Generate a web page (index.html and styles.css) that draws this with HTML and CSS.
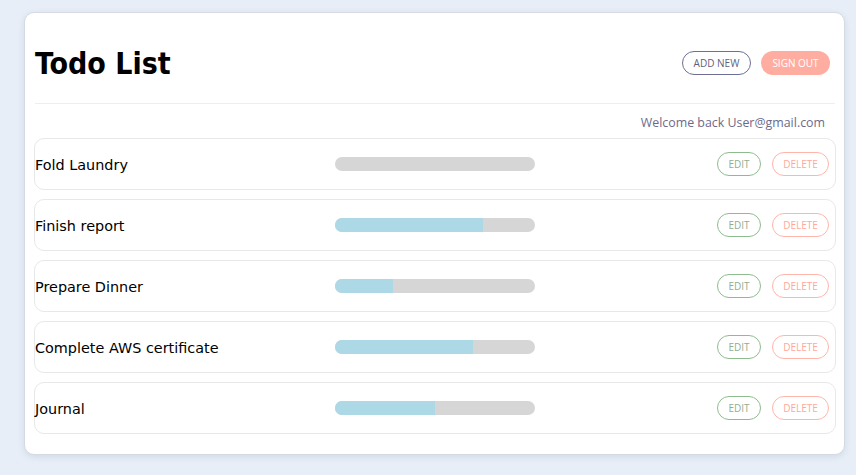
FILE: index.html
```html
<!DOCTYPE html>
<html>
<head>
<meta charset="utf-8">
<link rel="stylesheet" href="styles.css">
</head>
<body>
<div class="card">
  <div class="header">
    <h1 class="title">Todo List</h1>
    <div class="actions">
      <button class="btn btn-add">ADD NEW</button>
      <button class="btn btn-signout">SIGN OUT</button>
    </div>
  </div>
  <div class="divider"></div>
  <div class="welcome">Welcome back User@gmail.com</div>
  <div class="list">
    <div class="row"><div class="name">Fold Laundry</div><div class="bar"><div class="fill" style="width:0%"></div></div><div class="row-actions"><button class="btn btn-edit">EDIT</button><button class="btn btn-delete">DELETE</button></div></div>
    <div class="row"><div class="name">Finish report</div><div class="bar"><div class="fill" style="width:74%"></div></div><div class="row-actions"><button class="btn btn-edit">EDIT</button><button class="btn btn-delete">DELETE</button></div></div>
    <div class="row"><div class="name">Prepare Dinner</div><div class="bar"><div class="fill" style="width:29%"></div></div><div class="row-actions"><button class="btn btn-edit">EDIT</button><button class="btn btn-delete">DELETE</button></div></div>
    <div class="row"><div class="name">Complete AWS certificate</div><div class="bar"><div class="fill" style="width:69%"></div></div><div class="row-actions"><button class="btn btn-edit">EDIT</button><button class="btn btn-delete">DELETE</button></div></div>
    <div class="row"><div class="name">Journal</div><div class="bar"><div class="fill" style="width:50%"></div></div><div class="row-actions"><button class="btn btn-edit">EDIT</button><button class="btn btn-delete">DELETE</button></div></div>
  </div>
</div>
</body>
</html>
```
FILE: styles.css
```css
html, body { margin: 0; padding: 0; }
body {
  background: #e7eef7;
  padding: 12px 11px 0 24px;
  font-family: "DejaVu Sans", sans-serif;
  height: 475px;
  box-sizing: border-box;
}
.card {
  background: #fff;
  border: 1px solid #d5dbe3;
  border-radius: 10px;
  box-shadow: 0 2px 6px rgba(120,140,170,0.2);
  padding: 0 8px 19px 9px;
  height: 443px;
  box-sizing: border-box;
}
.header {
  display: flex;
  align-items: center;
  justify-content: space-between;
  padding: 30px 6px 20px 1px;
  height: 40px;
  box-sizing: content-box;
}
.title {
  margin: 0;
  font-family: "DejaVu Sans Condensed", "DejaVu Sans", sans-serif;
  font-stretch: condensed;
  font-size: 30px;
  font-weight: bold;
  color: #000;
}
.actions { display: flex; gap: 10px; }
.btn {
  font-family: "Open Sans", sans-serif;
  font-size: 10px;
  height: 24px;
  border-radius: 12px;
  background: #fff;
  padding: 0;
  cursor: pointer;
  box-sizing: border-box;
}
.btn-add {
  width: 69px;
  border: 1px solid #6e6e96;
  color: #5f5f80;
}
.btn-signout {
  width: 69px;
  border: none;
  background: #ffada0;
  color: #fff;
}
.divider {
  height: 1px;
  background: #eeeeee;
  margin: 0 1px;
}
.welcome {
  text-align: right;
  font-family: "Open Sans", sans-serif;
  font-size: 12.4px;
  color: #6c6a8c;
  padding: 10px 11px 0 0;
  line-height: 18px;
  height: 24px;
}
.list { display: flex; flex-direction: column; gap: 9px; }
.row {
  display: flex;
  align-items: center;
  height: 52px;
  box-sizing: border-box;
  border: 1px solid #e8e8e8;
  border-radius: 10px;
  padding: 0 6px 0 0;
}
.name {
  width: 300px;
  font-family: "DejaVu Sans", sans-serif;
  font-size: 14.4px;
  color: #000;
  padding-top: 2px;
}
.bar {
  width: 200px;
  height: 14px;
  border-radius: 7px;
  background: #d6d6d6;
  overflow: hidden;
}
.fill { height: 100%; background: #add8e6; }
.row-actions { margin-left: auto; display: flex; gap: 11px; }
.btn-edit {
  width: 44px;
  border: 1px solid #8fbc8f;
  color: #8fae8f;
}
.btn-delete {
  width: 57px;
  border: 1px solid #ffb5aa;
  color: #ffa89b;
}
```
